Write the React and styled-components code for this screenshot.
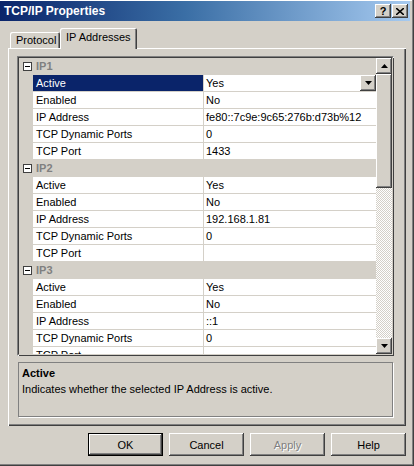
import React from "react";
import styled, { createGlobalStyle } from "styled-components";

const GlobalStyle = createGlobalStyle`
  html, body {
    margin: 0;
    padding: 0;
    background: #d4d0c8;
  }
  body {
    font-family: "Liberation Sans", Arial, sans-serif;
    font-size: 11px;
    color: #000;
  }
`;

const raised = `
  box-shadow: inset -1px -1px #404040, inset 1px 1px #ffffff,
    inset -2px -2px #808080, inset 2px 2px #d4d0c8;
`;

const Window = styled.div`
  width: 414px;
  height: 466px;
  box-sizing: border-box;
  background: #d4d0c8;
  padding: 1px 4px 4px 0;
  display: flex;
  flex-direction: column;
  box-shadow: inset -1px -1px #404040, inset -2px -2px #808080,
    inset 0 1px #ffffff;
`;

const TitleBar = styled.div`
  height: 20px;
  display: flex;
  align-items: center;
  padding: 0 2px 0 4px;
  background: linear-gradient(to right, #0a246a 0%, #3a6ea5 45%, #a6caf0 100%);
`;

const TitleText = styled.div`
  flex: 1;
  color: #fff;
  font-weight: bold;
  font-size: 12px;
`;

const CaptionButton = styled.div`
  width: 16px;
  height: 14px;
  background: #d4d0c8;
  ${raised}
  display: flex;
  align-items: center;
  justify-content: center;
  font-weight: bold;
  font-size: 11px;
  margin-left: ${(p) => (p.$gap ? "1px" : "0")};
`;

const Body = styled.div`
  flex: 1;
  display: flex;
  flex-direction: column;
  padding: 8px 4px 0 8px;
`;

const TabStrip = styled.div`
  display: flex;
  align-items: flex-end;
  height: 20px;
  padding-left: 2px;
  margin-bottom: -1px;
  position: relative;
  z-index: 1;
`;

const Tab = styled.div`
  box-sizing: border-box;
  width: ${(p) => p.$width}px;
  height: ${(p) => (p.$active ? 21 : 16)}px;
  padding: ${(p) => (p.$active ? "3px 0 0 6px" : "2px 0 0 6px")};
  background: #d4d0c8;
  border-top-left-radius: 2px;
  border-top-right-radius: 2px;
  box-shadow: inset 1px 1px #ffffff, inset -1px 0 #404040,
    inset -2px 0 #808080;
  margin-bottom: ${(p) => (p.$active ? "0" : "1px")};
`;

const TabPanel = styled.div`
  box-sizing: border-box;
  width: 398px;
  height: 378px;
  display: flex;
  flex-direction: column;
  gap: 6px;
  padding: 8px 12px 8px 9px;
  background: #d4d0c8;
  box-shadow: inset 1px 1px #ffffff, inset -1px -1px #404040,
    inset -2px -2px #808080;
`;

const Grid = styled.div`
  box-sizing: border-box;
  height: 300px;
  border: 1px solid;
  border-color: #808080 #ffffff #ffffff #808080;
  display: flex;
`;

const GridInner = styled.div`
  flex: 1;
  display: flex;
  border: 1px solid;
  border-color: #404040 #d4d0c8 #d4d0c8 #404040;
  background: #d4d0c8;
  overflow: hidden;
  box-shadow: 1px 1px 0 #404040;
`;

const Rows = styled.div`
  flex: 1;
  overflow: hidden;
  background: #d4d0c8;
`;

const Row = styled.div`
  display: flex;
  height: 17px;
`;

const Gutter = styled.div`
  width: 14px;
  flex: none;
  background: #d4d0c8;
  display: flex;
  align-items: center;
  justify-content: center;
`;

const Expander = styled.div`
  width: 7px;
  height: 7px;
  border: 1px solid #404040;
  background: #fff;
  position: relative;
  margin-left: 2px;
  margin-top: -1px;
  &::after {
    content: "";
    position: absolute;
    left: 1px;
    right: 1px;
    top: 3px;
    height: 1px;
    background: #000;
  }
`;

const CategoryLabel = styled.div`
  flex: 1;
  padding: 1px 0 0 3px;
  font-weight: bold;
  color: #808080;
  line-height: 15px;
`;

const NameCell = styled.div`
  box-sizing: border-box;
  width: 171px;
  flex: none;
  padding: 1px 0 0 3px;
  line-height: 15px;
  background: ${(p) => (p.$selected ? "#0a246a" : "#ffffff")};
  color: ${(p) => (p.$selected ? "#ffffff" : "#000000")};
  border-right: 1px solid #d4d0c8;
  border-bottom: 1px solid #d4d0c8;
  white-space: nowrap;
`;

const ValueCell = styled.div`
  flex: 1;
  display: flex;
  align-items: flex-start;
  padding: 1px 0 0 2px;
  line-height: 15px;
  background: #fff;
  border-bottom: 1px solid #d4d0c8;
  white-space: nowrap;
`;

const ValueText = styled.span`
  flex: 1;
`;

const ArrowButton = styled.div`
  width: 16px;
  height: 16px;
  flex: none;
  background: #d4d0c8;
  ${raised}
  display: flex;
  align-items: center;
  justify-content: center;
  margin-top: ${(p) => p.$offset || 0}px;
`;

const Scrollbar = styled.div`
  width: 16px;
  flex: none;
  display: flex;
  flex-direction: column;
`;

const Thumb = styled.div`
  height: 114px;
  background: #d4d0c8;
  ${raised}
`;

const Track = styled.div`
  flex: 1;
  background: repeating-conic-gradient(#ffffff 0 25%, #d4d0c8 0 50%) 0 0 / 2px
    2px;
`;

const Description = styled.div`
  box-sizing: border-box;
  height: 55px;
  margin-left: 1px;
  margin-right: 1px;
  border: 1px solid #808080;
  box-shadow: 1px 1px 0 #ffffff;
  padding: 3px 3px;
`;

const DescTitle = styled.div`
  font-weight: bold;
  line-height: 14px;
`;

const DescText = styled.div`
  margin-top: 2px;
  line-height: 14px;
`;

const ButtonRow = styled.div`
  display: flex;
  justify-content: flex-end;
  gap: 6px;
  margin-top: 7px;
  padding-right: 0;
`;

const Button = styled.div`
  box-sizing: border-box;
  width: 75px;
  height: 23px;
  display: flex;
  align-items: center;
  justify-content: center;
  background: #d4d0c8;
  color: ${(p) => (p.$disabled ? "#808080" : "#000")};
  text-shadow: ${(p) => (p.$disabled ? "1px 1px #ffffff" : "none")};
  ${(p) =>
    p.$default
      ? `box-shadow: inset 0 0 0 1px #000, inset -2px -2px #404040,
    inset 2px 2px #ffffff, inset -3px -3px #808080;`
      : raised}
`;

const Arrow = ({ up }) => (
  <svg width="7" height="4" viewBox="0 0 7 4">
    <polygon points={up ? "3.5,0 7,4 0,4" : "0,0 7,0 3.5,4"} fill="#000" />
  </svg>
);

const groups = [
  {
    name: "IP1",
    props: [
      ["Active", "Yes"],
      ["Enabled", "No"],
      ["IP Address", "fe80::7c9e:9c65:276b:d73b%12"],
      ["TCP Dynamic Ports", "0"],
      ["TCP Port", "1433"],
    ],
  },
  {
    name: "IP2",
    props: [
      ["Active", "Yes"],
      ["Enabled", "No"],
      ["IP Address", "192.168.1.81"],
      ["TCP Dynamic Ports", "0"],
      ["TCP Port", ""],
    ],
  },
  {
    name: "IP3",
    props: [
      ["Active", "Yes"],
      ["Enabled", "No"],
      ["IP Address", "::1"],
      ["TCP Dynamic Ports", "0"],
      ["TCP Port", ""],
    ],
  },
];

const App = () => {
  return (
    <>
      <GlobalStyle />
      <Window>
        <TitleBar>
          <TitleText>TCP/IP Properties</TitleText>
          <CaptionButton>?</CaptionButton>
          <CaptionButton $gap>
            <svg width="8" height="7" viewBox="0 0 8 7">
              <path d="M0 0 L8 7 M8 0 L0 7" stroke="#000" strokeWidth="1.6" />
            </svg>
          </CaptionButton>
        </TitleBar>
        <Body>
          <TabStrip>
            <Tab $width={50}>Protocol</Tab>
            <Tab $width={77} $active>
              IP Addresses
            </Tab>
          </TabStrip>
          <TabPanel>
            <Grid>
              <GridInner>
                <Rows>
                  {groups.map((g, gi) => (
                    <React.Fragment key={g.name}>
                      <Row>
                        <Gutter>
                          <Expander />
                        </Gutter>
                        <CategoryLabel>{g.name}</CategoryLabel>
                      </Row>
                      {g.props.map(([name, value], pi) => {
                        const selected = gi === 0 && pi === 0;
                        return (
                          <Row key={name}>
                            <Gutter />
                            <NameCell $selected={selected}>{name}</NameCell>
                            <ValueCell>
                              <ValueText>{value}</ValueText>
                              {selected && (
                                <ArrowButton $offset={-1}>
                                  <Arrow />
                                </ArrowButton>
                              )}
                            </ValueCell>
                          </Row>
                        );
                      })}
                    </React.Fragment>
                  ))}
                </Rows>
                <Scrollbar>
                  <ArrowButton>
                    <Arrow up />
                  </ArrowButton>
                  <Thumb />
                  <Track />
                  <ArrowButton>
                    <Arrow />
                  </ArrowButton>
                </Scrollbar>
              </GridInner>
            </Grid>
            <Description>
              <DescTitle>Active</DescTitle>
              <DescText>
                Indicates whether the selected IP Address is active.
              </DescText>
            </Description>
          </TabPanel>
          <ButtonRow>
            <Button $default>OK</Button>
            <Button>Cancel</Button>
            <Button $disabled>Apply</Button>
            <Button>Help</Button>
          </ButtonRow>
        </Body>
      </Window>
    </>
  );
};

export default App;
